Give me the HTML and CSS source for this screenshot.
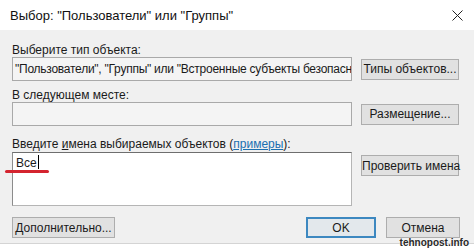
FILE: index.html
```html
<!DOCTYPE html>
<html lang="ru">
<head>
    <meta charset="UTF-8">
    <meta name="viewport" content="width=device-width, initial-scale=1.0">
    <title>Выбор: "Пользователи" или "Группы"</title>
    <link rel="stylesheet" href="styles.css">
</head>
<body>

<div class="window">
    <div class="titlebar">
        <span class="title">Выбор: "Пользователи" или "Группы"</span>
        <svg class="close" width="11" height="11" viewBox="0 0 11 11">
            <path d="M0.5 0.5 L10.5 10.5 M10.5 0.5 L0.5 10.5" stroke="#222" stroke-width="1" fill="none"/>
        </svg>
    </div>

    <div class="content">
        <div class="label first">Выберите тип объекта:</div>
        <div class="row">
            <div class="field">"Пользователи", "Группы" или "Встроенные субъекты безопасн</div>
            <button class="btn">Типы объектов...</button>
        </div>

        <div class="label">В следующем месте:</div>
        <div class="row">
            <div class="field"></div>
            <button class="btn">Размещение...</button>
        </div>

        <div class="label third">Введите <span class="accel">и</span>мена выбираемых объектов (<a class="link" href="#">примеры</a>):</div>
        <div class="row top">
            <div class="names">Все<span class="caret"></span><span class="marker"></span></div>
            <button class="btn check">Проверить имена</button>
        </div>

        <div class="actions">
            <button class="btn more">Дополнительно...</button>
            <div class="spacer"></div>
            <button class="btn ok">OK</button>
            <button class="btn cancel">Отмена</button>
        </div>
    </div>

    <div class="watermark">tehnopost.info</div>
</div>

</body>
</html>
```

FILE: styles.css
```css
body {
    margin: 0;
    padding: 0;
    background-color: #ffffff;
    font-family: 'Liberation Sans', Arial, sans-serif;
    font-size: 12px;
    color: #1a1a1a;
}

.window {
    position: relative;
    width: 474px;
    height: 251px;
    overflow: hidden;
}

.titlebar {
    height: 30px;
    display: flex;
    align-items: center;
    justify-content: space-between;
    padding: 0 11px 0 10px;
    background-color: #ffffff;
}

.title {
    font-size: 13px;
    color: #111;
}

.content {
    height: 214px;
    box-sizing: border-box;
    padding: 13px 15px 0 12px;
    background-color: #f0f0f0;
    border-bottom: 1px solid #d4d4d4;
}

.label {
    height: 14px;
    line-height: 14px;
    margin-top: 7px;
    white-space: nowrap;
}

.label.first {
    margin-top: 0;
}

.label.third {
    margin-top: 11px;
}

.accel {
    text-decoration: underline;
}

.link {
    color: #1a6fb0;
    text-decoration: underline;
}

.row {
    display: grid;
    grid-template-columns: 340px 98px;
    column-gap: 9px;
    align-items: center;
    margin-top: 0;
}

.row.top {
    align-items: start;
    margin-top: 1px;
}

.field {
    height: 24px;
    line-height: 22px;
    box-sizing: border-box;
    padding: 0 2px;
    border: 1px solid #a9a9a9;
    background-color: #f4f4f4;
    white-space: nowrap;
    overflow: hidden;
    letter-spacing: -0.25px;
}

.names {
    position: relative;
    height: 54px;
    box-sizing: border-box;
    padding: 2px 3px;
    line-height: 16px;
    background-color: #ffffff;
    border: 1px solid #b5b5b5;
    border-top-color: #6e6e6e;
    border-left-color: #8c8c8c;
}

.caret {
    display: inline-block;
    width: 1px;
    height: 14px;
    margin-left: 1px;
    vertical-align: -2px;
    background-color: #000;
}

.marker {
    position: absolute;
    left: -8px;
    top: 17px;
    width: 44px;
    height: 3px;
    border-radius: 2px;
    background-color: #d4242f;
}

.btn {
    height: 21px;
    padding: 0;
    box-sizing: border-box;
    border: 1px solid #adadad;
    background-color: #e1e1e1;
    font-family: inherit;
    font-size: 12px;
    color: #1a1a1a;
    white-space: nowrap;
}

.check {
    margin-top: 3px;
}

.actions {
    display: flex;
    align-items: center;
    margin-top: 11px;
}

.more {
    width: 103px;
}

.spacer {
    flex: 1;
}

.ok {
    width: 70px;
    border: 2px solid #3d88c0;
    background-color: #e3e8ec;
}

.cancel {
    width: 74px;
    margin-left: 10px;
    margin-right: -1px;
}

.watermark {
    position: absolute;
    right: 5px;
    top: 237px;
    font-size: 10px;
    font-weight: bold;
    color: #2a2a2a;
    text-shadow: 0 0 2px #ffffff;
}
```
